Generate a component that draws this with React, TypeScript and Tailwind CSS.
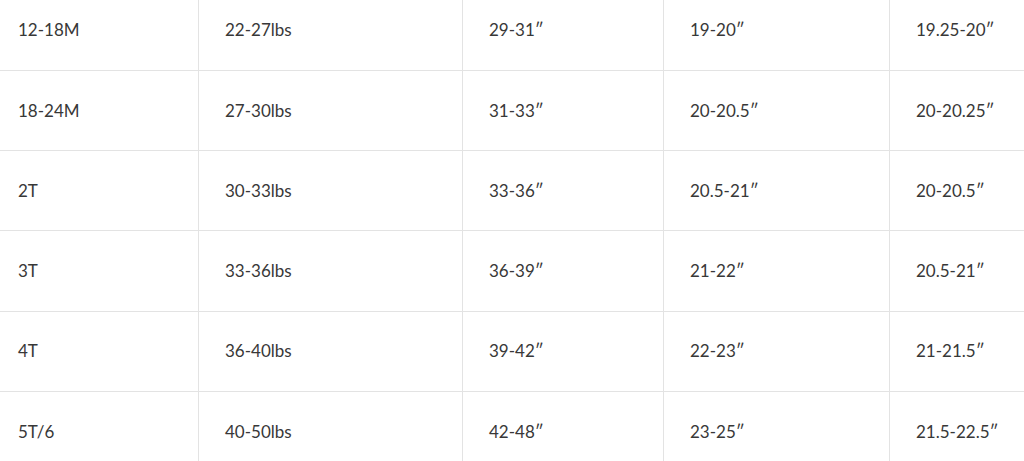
import React from "react";

const rows: string[][] = [
  ["12-18M", "22-27lbs", "29-31″", "19-20″", "19.25-20″"],
  ["18-24M", "27-30lbs", "31-33″", "20-20.5″", "20-20.25″"],
  ["2T", "30-33lbs", "33-36″", "20.5-21″", "20-20.5″"],
  ["3T", "33-36lbs", "36-39″", "21-22″", "20.5-21″"],
  ["4T", "36-40lbs", "39-42″", "22-23″", "21-21.5″"],
  ["5T/6", "40-50lbs", "42-48″", "23-25″", "21.5-22.5″"],
];

export default function App() {
  return (
    <div className="w-[1024px] h-[461px] overflow-hidden bg-white">
      <div
        className="-mt-[9.5px] text-[17px] text-[#383838]"
        style={{ fontFamily: "Lato, 'Open Sans', sans-serif" }}
      >
        {rows.map((r, i) => (
          <div
            key={i}
            className="grid grid-cols-[198px_264px_201px_226px_1fr] h-[80.25px] border-b border-[#e3e3e3]"
          >
            {r.map((c, j) => (
              <div
                key={j}
                className={
                  j === 0
                    ? "flex items-center pl-[18px]"
                    : "flex items-center pl-[26px] border-l border-[#e3e3e3]"
                }
              >
                {c}
              </div>
            ))}
          </div>
        ))}
      </div>
    </div>
  );
}
